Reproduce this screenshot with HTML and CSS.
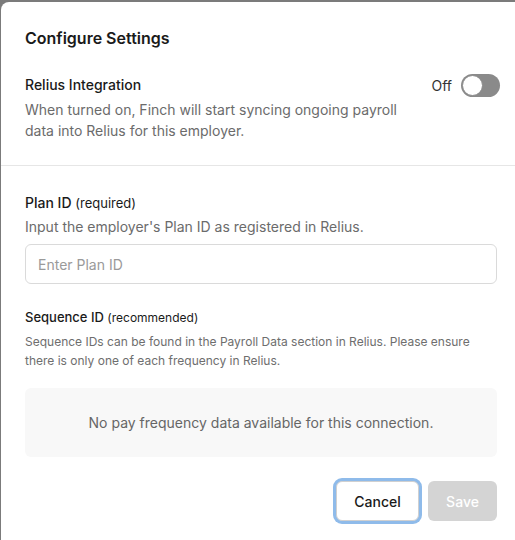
FILE: index.html
```html
<!DOCTYPE html>
<html>
<head>
<meta charset="utf-8">
<link rel="stylesheet" href="styles.css">
</head>
<body>
<div class="modal">
  <div class="top">
    <h1 class="title">Configure Settings</h1>
    <div class="integration">
      <div class="int-text">
        <div class="label">Relius Integration</div>
        <p class="desc">When turned on, Finch will start syncing ongoing payroll data into Relius for this employer.</p>
      </div>
      <div class="toggle-wrap">
        <span class="off">Off</span>
        <span class="toggle"><span class="knob"></span></span>
      </div>
    </div>
  </div>
  <div class="divider"></div>
  <div class="body">
    <div class="label">Plan ID <span class="hint">(required)</span></div>
    <p class="desc plan-desc">Input the employer's Plan ID as registered in Relius.</p>
    <input class="input" type="text" placeholder="Enter Plan ID">
    <div class="label seq">Sequence ID <span class="hint seq-hint">(recommended)</span></div>
    <p class="small">Sequence IDs can be found in the Payroll Data section in Relius. Please ensure there is only one of each frequency in Relius.</p>
    <div class="empty">No pay frequency data available for this connection.</div>
    <div class="actions">
      <button class="btn cancel">Cancel</button>
      <button class="btn save" disabled>Save</button>
    </div>
  </div>
</div>
</body>
</html>
```

FILE: styles.css
```css
* { box-sizing: border-box; }
html, body { margin: 0; padding: 0; height: 100%; }
body {
  background: #7b7b7b;
  font-family: Inter, "Noto Sans", sans-serif;
  color: #1c1c1c;
  padding: 2px 0 0 1px;
  overflow: hidden;
}
.modal {
  background: #fff;
  border-top-left-radius: 8px;
  height: 538px;
  width: 514px;
}
.top { padding: 24px 18px 24px 24px; }
.title {
  margin: 0;
  font-size: 16px;
  line-height: 24px;
  font-weight: 600;
  color: #1a1a1a;
}
.integration {
  display: flex;
  justify-content: space-between;
  align-items: flex-start;
  margin-top: 25px;
}
.int-text { width: 380px; }
.label {
  font-size: 14px;
  line-height: 20px;
  font-weight: 500;
  color: #1a1a1a;
}
.hint { font-size: 13px; font-weight: 400; }
.desc {
  margin: 4px 0 0;
  font-size: 14px;
  line-height: 21px;
  color: #6b6b6b;
}
.toggle-wrap {
  display: flex;
  align-items: center;
  gap: 9px;
  margin-right: -3px;
  margin-top: -1px;
}
.off { font-size: 14px; color: #333; }
.toggle {
  width: 39px;
  height: 23px;
  border-radius: 12px;
  background: #8a8a8a;
  position: relative;
  display: inline-block;
}
.knob {
  position: absolute;
  left: 1px;
  top: 1px;
  width: 21px;
  height: 21px;
  border-radius: 50%;
  background: #fff;
  border: 1px solid #8a8a8a;
}
.divider { height: 1px; background: #e6e6e6; }
.body { padding: 27px 18px 0 24px; }
.plan-desc { margin-top: 4px; line-height: 20px; }
.input {
  display: block;
  width: 100%;
  height: 40px;
  margin-top: 7px;
  border: 1px solid #dadada;
  border-radius: 6px;
  padding: 0 12px;
  font-family: inherit;
  font-size: 14px;
  color: #1a1a1a;
  outline: none;
}
.input::placeholder { color: #9a9a9a; }
.seq { margin-top: 23px; font-size: 13px; }
.seq-hint { font-size: 12px; }
.small {
  margin: 5px 0 0;
  font-size: 12px;
  line-height: 18.5px;
  color: #6e6e6e;
}
.empty {
  margin-top: 18px;
  background: #f8f8f8;
  border-radius: 6px;
  padding: 24px 0;
  line-height: 21px;
  text-align: center;
  font-size: 14px;
  color: #666;
}
.actions {
  display: flex;
  justify-content: flex-end;
  gap: 9px;
  margin-top: 24px;
}
.btn {
  height: 40px;
  border-radius: 6px;
  font-family: inherit;
  font-size: 14px;
  font-weight: 500;
}
.cancel {
  width: 83px;
  background: #fff;
  color: #1a1a1a;
  border: 1px solid #d0d0d0;
  box-shadow: 0 0 0 3px #8fbbea;
}
.save {
  width: 69px;
  background: #d4d4d4;
  color: #fff;
  border: none;
}
```
